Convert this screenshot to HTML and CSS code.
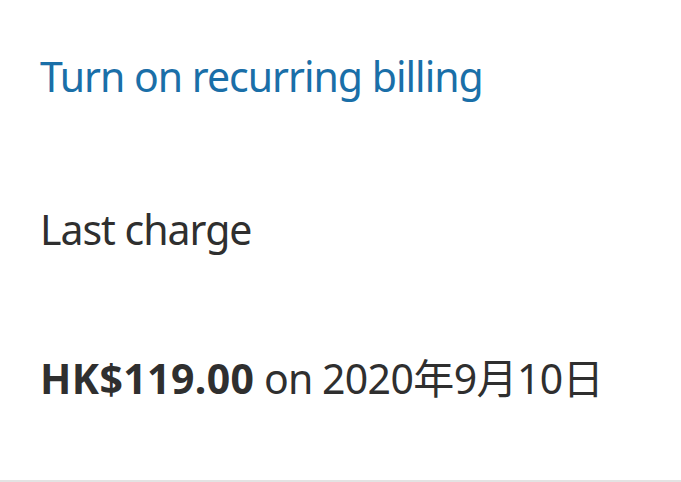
FILE: index.html
```html
<!DOCTYPE html>
<html lang="en">
<head>
<meta charset="UTF-8">
<title>Billing</title>
<link rel="stylesheet" href="styles.css">
</head>
<body>

<div class="panel">
    <a class="recurring-link" href="#">Turn on recurring billing</a>
    <div class="label">Last charge</div>
    <div class="charge"><b>HK$119.00</b> on <span class="date">2020年9月10日</span></div>
</div>

</body>
</html>
```

FILE: styles.css
```css
body {
    margin: 0;
    padding: 0;
    background: #fff;
    color: #2f2f2f;
    font-family: "Noto Sans", "Noto Sans CJK TC", sans-serif;
}

.panel {
    height: 480px;
    border-bottom: 2px solid #e3e3e3;
    padding: 0 40px;
    display: flex;
    flex-direction: column;
    align-items: flex-start;
}

.recurring-link,
.label,
.charge {
    font-size: 41px;
    line-height: 56px;
    letter-spacing: -1px;
}

.recurring-link {
    color: #1a6fa8;
    text-decoration: none;
    margin-top: 48px;
}

.label {
    margin-top: 97px;
}

.charge {
    margin-top: 93px;
}

.charge b {
    font-weight: 700;
    letter-spacing: 0.4px;
}

.date {
    letter-spacing: -0.6px;
}
```
